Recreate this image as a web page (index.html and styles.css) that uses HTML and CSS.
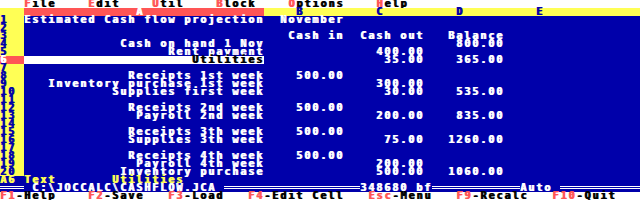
FILE: index.html
```html
<!DOCTYPE html>
<html>
<head>
<meta charset="utf-8">
<link rel="stylesheet" href="styles.css">
</head>
<body>
<div class="screen">
  <div class="menu">
    <span><span class="hk">F</span>ile</span>
    <span><span class="hk">E</span>dit</span>
    <span><span class="hk">U</span>til</span>
    <span><span class="hk">B</span>lock</span>
    <span><span class="hk">O</span>ptions</span>
    <span><span class="hk">H</span>elp</span>
  </div>
  <div class="sheet">
    <div class="row">
      <div class="rn"></div><div class="hdr a">A</div><div class="hdr">B</div><div class="hdr">C</div><div class="hdr">D</div><div class="hdr">E</div><div class="hdr"></div>
    </div>
    <div class="row"><div class="rn">1</div><div class="c">Estimated Cash flow projection</div><div class="c ind">November</div><div></div><div></div><div></div><div></div></div>
    <div class="row"><div class="rn">2</div><div></div><div></div><div></div><div></div><div></div><div></div></div>
    <div class="row"><div class="rn">3</div><div></div><div class="r">Cash in</div><div class="r">Cash out</div><div class="r">Balance</div><div></div><div></div></div>
    <div class="row"><div class="rn">4</div><div class="r">Cash on hand 1 Nov</div><div></div><div></div><div class="r">800.00</div><div></div><div></div></div>
    <div class="row"><div class="rn">5</div><div class="r">Rent payment</div><div></div><div class="r">400.00</div><div></div><div></div><div></div></div>
    <div class="row"><div class="rn cur">6</div><div class="r sel">Utilities</div><div></div><div class="r">35.00</div><div class="r">365.00</div><div></div><div></div></div>
    <div class="row"><div class="rn">7</div><div></div><div></div><div></div><div></div><div></div><div></div></div>
    <div class="row"><div class="rn">8</div><div class="r">Receipts 1st week</div><div class="r">500.00</div><div></div><div></div><div></div><div></div></div>
    <div class="row"><div class="rn">9</div><div class="r">Inventory purchase 1st week</div><div></div><div class="r">300.00</div><div></div><div></div><div></div></div>
    <div class="row"><div class="rn">10</div><div class="r">Supplies first week</div><div></div><div class="r">30.00</div><div class="r">535.00</div><div></div><div></div></div>
    <div class="row"><div class="rn">11</div><div></div><div></div><div></div><div></div><div></div><div></div></div>
    <div class="row"><div class="rn">12</div><div class="r">Receipts 2nd week</div><div class="r">500.00</div><div></div><div></div><div></div><div></div></div>
    <div class="row"><div class="rn">13</div><div class="r">Payroll 2nd week</div><div></div><div class="r">200.00</div><div class="r">835.00</div><div></div><div></div></div>
    <div class="row"><div class="rn">14</div><div></div><div></div><div></div><div></div><div></div><div></div></div>
    <div class="row"><div class="rn">15</div><div class="r">Receipts 3th week</div><div class="r">500.00</div><div></div><div></div><div></div><div></div></div>
    <div class="row"><div class="rn">16</div><div class="r">Supplies 3th week</div><div></div><div class="r">75.00</div><div class="r">1260.00</div><div></div><div></div></div>
    <div class="row"><div class="rn">17</div><div></div><div></div><div></div><div></div><div></div><div></div></div>
    <div class="row"><div class="rn">18</div><div class="r">Receipts 4th week</div><div class="r">500.00</div><div></div><div></div><div></div><div></div></div>
    <div class="row"><div class="rn">19</div><div class="r">Payroll 4th week</div><div></div><div class="r">200.00</div><div></div><div></div><div></div></div>
    <div class="row"><div class="rn">20</div><div class="r">Inventory purchase</div><div></div><div class="r">500.00</div><div class="r">1060.00</div><div></div><div></div></div>
  </div>
  <div class="status">
    <span class="st-cell">A6 Text</span><span class="st-val">Utilities</span>
  </div>
  <div class="pathbar">
    <span class="dl w3"></span>
    <span class="path">C:\JOCCALC\CASHFLOW.JCA</span>
    <span class="dl w17"></span>
    <span class="mem">348680 bf</span>
    <span class="dl w11"></span>
    <span class="mode">Auto</span>
    <span class="dl w10"></span>
  </div>
  <div class="keys"><span class="hk">F1</span>-Help    <span class="hk">F2</span>-Save   <span class="hk">F3</span>-Load   <span class="hk">F4</span>-Edit Cell   <span class="hk">Esc</span>-Menu   <span class="hk">F9</span>-Recalc   <span class="hk">F10</span>-Quit</div>
</div>
</body>
</html>
```

FILE: styles.css
```css
html, body {
  margin: 0;
  padding: 0;
  background: #0000aa;
}

body {
  width: 640px;
  height: 200px;
  overflow: hidden;
  font-family: "DejaVu Sans Mono", monospace;
  font-weight: bold;
  font-size: 10px;
  line-height: 8px;
  letter-spacing: 1.98px;
  color: #ffffff;
  text-shadow: 1px 0 0 currentColor;
}

.screen {
  display: flex;
  flex-direction: column;
  width: 640px;
  height: 200px;
  background: #0000aa;
}

.menu {
  display: flex;
  gap: 32px;
  height: 8px;
  padding-left: 24px;
  background: #ffffff;
  color: #000000;
}

.hk {
  color: #ff5555;
}

.sheet {
  display: flex;
  flex-direction: column;
}

.row {
  display: grid;
  grid-template-columns: 24px 240px 80px 80px 80px 80px 56px;
  height: 8px;
}

.row > div {
  white-space: pre;
  height: 8px;
}

.rn {
  background: #ffff55;
  color: #0000aa;
}

.rn.cur {
  background: #ff5555;
  color: #ffffff;
}

.hdr {
  background: #ffff55;
  color: #0000aa;
  padding-left: 32px;
}

.hdr.a {
  background: #ff5555;
  color: #ffffff;
  padding-left: 112px;
}

.r {
  text-align: right;
}

.ind {
  padding-left: 16px;
}

.sel {
  background: #ffffff;
  color: #000000;
}

.status {
  display: flex;
  height: 8px;
  color: #ffff55;
  white-space: pre;
}

.st-val {
  margin-left: 56px;
}

.pathbar {
  display: flex;
  height: 8px;
  white-space: pre;
}

.dl {
  display: block;
  height: 8px;
  background: linear-gradient(to bottom,
    transparent 0, transparent 2px,
    #ffffff 2px, #ffffff 3px,
    transparent 3px, transparent 4px,
    #ffffff 4px, #ffffff 5px,
    transparent 5px);
}

.w3 { width: 24px; margin-right: 8px; }
.w17 { width: 136px; margin-left: 8px; }
.w11 { width: 88px; }
.w10 { width: 80px; margin-left: 8px; }

.keys {
  height: 8px;
  background: #ffffff;
  color: #000000;
  white-space: pre;
}
```
